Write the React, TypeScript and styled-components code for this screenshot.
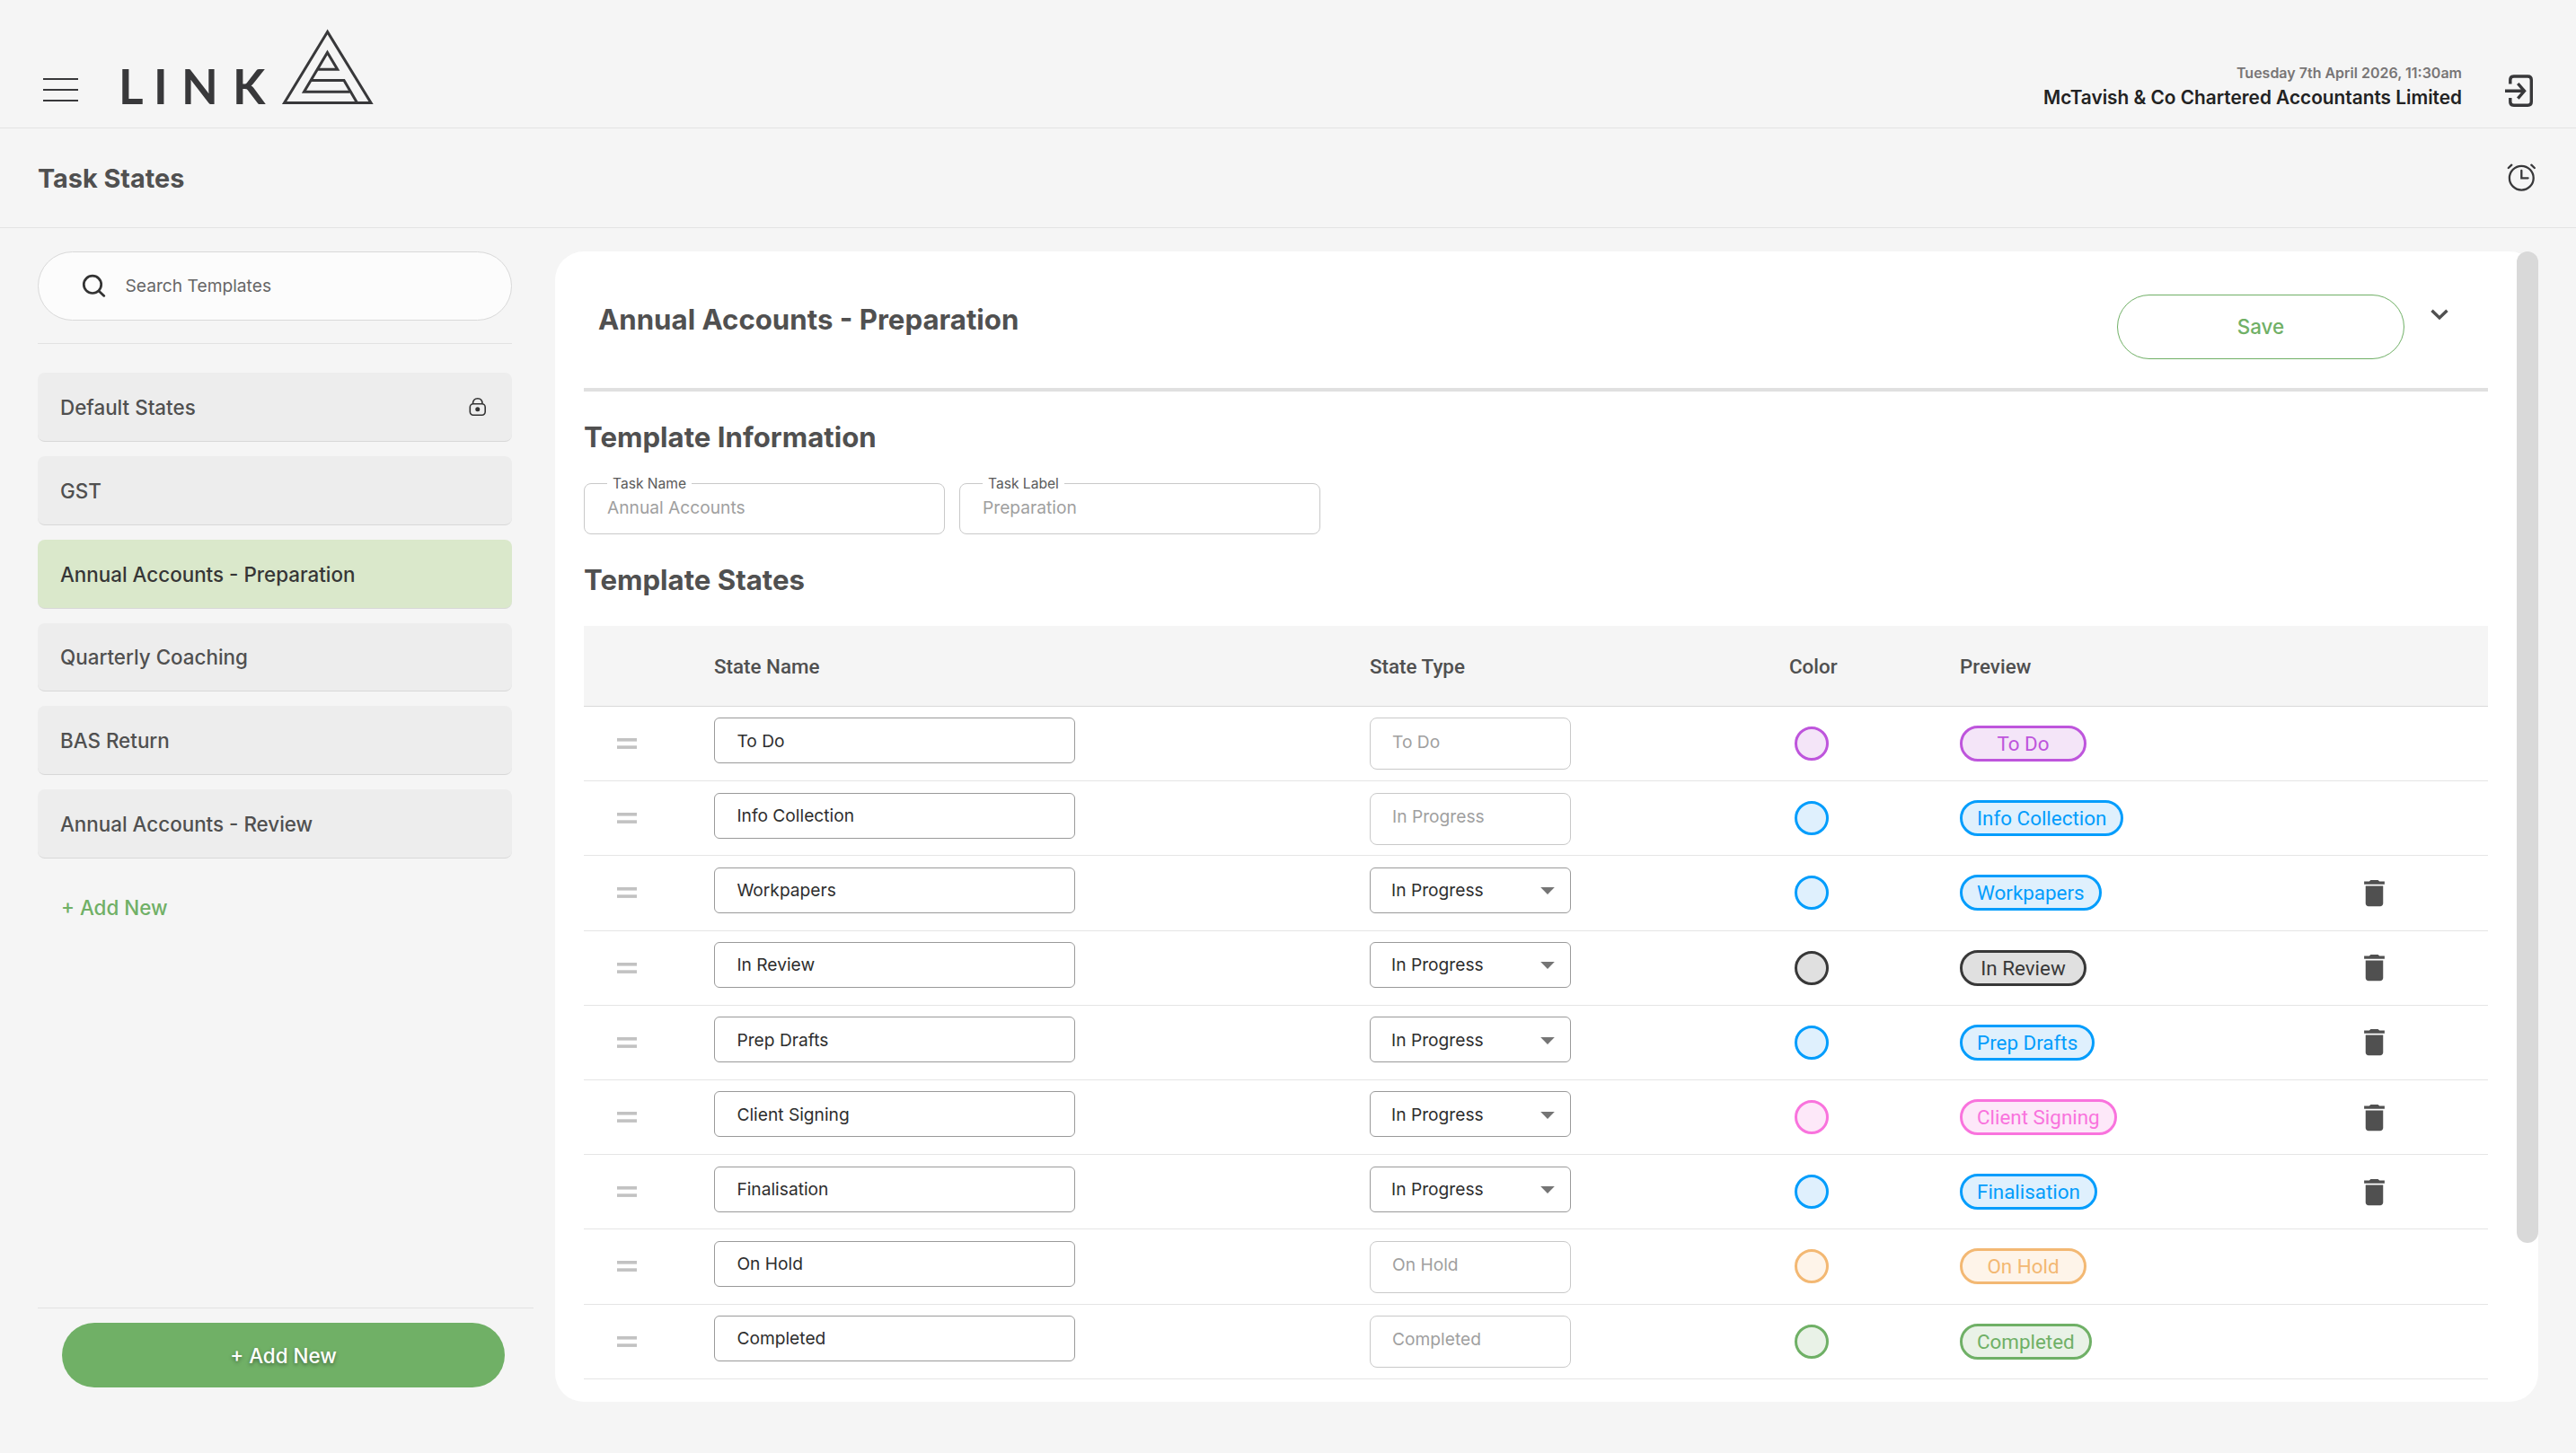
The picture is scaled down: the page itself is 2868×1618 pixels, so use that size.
import styled, { createGlobalStyle } from "styled-components"

interface StateRow {
    name: string;
    type: string;
    color: string;
    fill: string;
    locked?: boolean;
}

const templates = [
    { label: "Default States", locked: true },
    { label: "GST" },
    { label: "Annual Accounts - Preparation", active: true },
    { label: "Quarterly Coaching" },
    { label: "BAS Return" },
    { label: "Annual Accounts - Review" },
]

const blue = { color: "#039dfc", fill: "#dff0fd" }

const states: StateRow[] = [
    { name: "To Do", type: "To Do", color: "#be55dc", fill: "#f4e5f8", locked: true },
    { name: "Info Collection", type: "In Progress", ...blue, locked: true },
    { name: "Workpapers", type: "In Progress", ...blue },
    { name: "In Review", type: "In Progress", color: "#383838", fill: "#e0e0e0" },
    { name: "Prep Drafts", type: "In Progress", ...blue },
    { name: "Client Signing", type: "In Progress", color: "#f973dd", fill: "#fde8f9" },
    { name: "Finalisation", type: "In Progress", ...blue },
    { name: "On Hold", type: "On Hold", color: "#f3b873", fill: "#fef4e9", locked: true },
    { name: "Completed", type: "Completed", color: "#6fb066", fill: "#e9f2e7", locked: true },
]

const GlobalStyle = createGlobalStyle`
    * {
        box-sizing: border-box;
    }

    body {
        margin: 0;
        background: #f5f5f5;
        color: #505050;
        font-family: Inter, "Liberation Sans", sans-serif;
    }

    svg {
        display: block;
        flex: none;
    }
`;

const Page = styled.div`
    display: flex;
    flex-direction: column;
    height: 1618px;
    overflow: hidden;
`;

const TopBar = styled.header`
    display: flex;
    align-items: flex-end;
    height: 143px;
    padding: 0 46px 18px 48px;
    border-bottom: 1px solid #e3e3e3;
`;

const MenuButton = styled.div`
    display: flex;
    flex-direction: column;
    gap: 10px;
    width: 39px;
    margin: 0 45px 11px 0;
`;

const MenuLine = styled.span`
    height: 2px;
    background: #38383a;
`;

const Logo = styled.div`
    display: flex;
    align-items: flex-end;
    margin-bottom: 7px;
`;

const LogoText = styled.div`
    display: grid;
    grid-template-columns: 39px 31px 57px 54px;
    height: 43px;
    color: #38383a;
    font: bold 53px/43px Lato, sans-serif;
`;

const Account = styled.div`
    display: flex;
    flex-direction: column;
    align-items: flex-end;
    margin-left: auto;
    margin-right: 48px;
`;

const DateText = styled.span`
    color: #787576;
    font-size: 16px;
    font-weight: 600;
    line-height: 24px;
`;

const CompanyName = styled.span`
    color: #222;
    font-size: 20.8px;
    font-weight: 600;
    line-height: 31px;
`;

const LogoutButton = styled.div`
    margin-bottom: 4px;
`;

const TitleBar = styled.div`
    display: flex;
    align-items: center;
    justify-content: space-between;
    height: 111px;
    padding: 0 43px 0 42px;
    border-bottom: 1px solid #e3e3e3;
`;

const PageTitle = styled.h1`
    margin: 0;
    font-size: 28.8px;
    font-weight: 700;
`;

const Body = styled.div`
    display: flex;
    flex: 1;
    padding: 26px 42px 57px;
`;

const Sidebar = styled.aside`
    display: flex;
    flex-direction: column;
    width: 576px;
`;

const Search = styled.div`
    display: flex;
    align-items: center;
    gap: 21.5px;
    width: 528px;
    height: 77px;
    padding: 0 0 1px 48px;
    border: 1px solid #d9d9d9;
    border-radius: 39px;
    background: #fcfcfc;
    color: #666;
    font-size: 19.2px;
`;

const Divider = styled.div`
    height: 1px;
    background: #e2e2e2;
`;

const SearchDivider = styled(Divider)`
    width: 528px;
    margin-top: 25px;
`;

const FooterDivider = styled(Divider)`
    width: 552px;
`;

const TemplateList = styled.div`
    display: flex;
    flex-direction: column;
    gap: 16px;
    width: 528px;
    margin-top: 32px;
`;

const TemplateItem = styled.div<{ $active?: boolean }>`
    display: flex;
    align-items: center;
    justify-content: space-between;
    height: 76.85px;
    padding: 1px 28px 0 25px;
    border-bottom: 1px solid #d8d8d8;
    border-radius: 8px;
    background: ${(p) => (p.$active ? "#dae8cb" : "#ededed")};
    color: ${(p) => (p.$active ? "#363636" : "#505050")};
    font-size: 22.4px;
    font-weight: 500;
`;

const AddLink = styled(TemplateItem)`
    padding-left: 26px;
    border-color: transparent;
    background: none;
    color: #70b066;
`;

const SidebarFooter = styled.div`
    margin-top: auto;
`;

const AddButton = styled.div`
    display: flex;
    align-items: center;
    justify-content: center;
    width: 493px;
    height: 72px;
    margin: 16px 0 16px 27px;
    border-radius: 36px;
    background: #70b066;
    color: white;
    font-size: 22.4px;
    font-weight: 500;
    text-shadow: 0 2px 4px rgba(0, 0, 0, 0.4);
`;

const Panel = styled.main`
    position: relative;
    width: 2208px;
    padding: 0 56px 0 32px;
    border-radius: 32px;
    background: white;
`;

const ScrollThumb = styled.div`
    position: absolute;
    top: 0;
    right: 0;
    width: 24px;
    height: 1104px;
    border-radius: 12px;
    background: #d9d9d9;
`;

const PanelHeader = styled.div`
    display: flex;
    align-items: flex-start;
    height: 156px;
    padding: 48px 44px 0 16px;
    border-bottom: 4px solid #e0e0e0;
`;

const PanelTitle = styled.h2`
    flex: 1;
    margin: 8px 0 0;
    font-size: 31.2px;
    line-height: 40px;
`;

const SaveButton = styled.div`
    display: flex;
    align-items: center;
    justify-content: center;
    width: 320px;
    height: 72px;
    margin-right: 29px;
    padding-bottom: 1px;
    border: 1px solid #70b066;
    border-radius: 36px;
    color: #70b066;
    font-size: 22.4px;
    font-weight: 500;
`;

const ChevronIcon = styled.svg`
    margin-top: 16px;
`;

const SectionTitle = styled.h3`
    margin: 31px 0 -1px;
    font-size: 31.2px;
    line-height: 40px;
`;

const Fields = styled.div`
    display: flex;
    gap: 16px;
    margin-top: 24px;
`;

const Field = styled.fieldset`
    width: 402px;
    height: 65px;
    margin: 0;
    padding: 0 25px;
    border: 1px solid #c9c9c9;
    border-radius: 8px;
    color: #a0a0a0;
    font-size: 19.2px;
    line-height: 36px;
`;

const FieldLabel = styled.legend`
    padding: 0 6px;
    color: #5a5a5a;
    font-size: 15.6px;
    line-height: 17px;
`;

const Table = styled.div`
    margin-top: 32px;
`;

const Row = styled.div`
    display: grid;
    grid-template-columns: 145px 730px 467px 190px 442px 1fr;
    height: 83.2px;
    border-bottom: 1px solid #e5e5e5;
`;

const HeadRow = styled(Row)`
    align-items: center;
    height: 90px;
    border-color: #dadada;
    background: #f5f5f5;
    font-family: Roboto, sans-serif;
    font-size: 22.4px;
    font-weight: 500;
`;

const Cell = styled.div<{ $top?: boolean }>`
    display: flex;
    align-items: ${(p) => (p.$top ? "flex-start" : "center")};
    padding-top: ${(p) => (p.$top ? "12.4px" : "0")};
`;

const DragIcon = styled.svg`
    margin-left: 37px;
`;

const NameInput = styled.div`
    display: flex;
    align-items: center;
    width: 402px;
    height: 51px;
    padding: 0 24.4px;
    border: 1px solid #9a9a9a;
    border-radius: 6px;
    color: #2e2e2e;
    font-size: 19.2px;
`;

const TypeSelect = styled(NameInput)`
    justify-content: space-between;
    width: 224px;
    padding: 0 7px 0 23px;
`;

const TypeLocked = styled(NameInput)`
    width: 224px;
    height: 58px;
    padding: 0 24px 5px;
    border-color: #c9c9c9;
    border-radius: 8px;
    color: #a0a0a0;
`;

const ColorDot = styled.span<{ $color: string; $fill: string }>`
    width: 38px;
    height: 38px;
    margin-left: 6px;
    border: 3px solid ${(p) => p.$color};
    border-radius: 50%;
    background: ${(p) => p.$fill};
`;

const Chip = styled.span<{ $color: string; $fill: string }>`
    min-width: 141px;
    height: 40px;
    padding: 0 16px;
    border: 3px solid ${(p) => p.$color};
    border-radius: 20px;
    background: ${(p) => p.$fill};
    color: ${(p) => p.$color};
    font: 22.4px/35px Roboto, sans-serif;
    text-align: center;
    white-space: nowrap;
`;

function LogoMark() {
    return (
        <svg width="103" height="86" viewBox="313 31 103 86" fill="none" stroke="#38383a" strokeWidth="3">
            <path d="M364.6 35.5 316.6 114.5H413Z" />
            <path d="M389.5 102.3H338.5L364.5 58.5 375.7 77.2H354" />
            <path d="M347 89.6H383L397.6 114.5" />
        </svg>
    )
}

function LogoutIcon() {
    return (
        <svg width="33" height="38" viewBox="2789 82 33 38" fill="none" stroke="#38383a" strokeWidth="3.4">
            <path d="M2794.8 93.5V89q0-4 4-4h15.5q4 0 4 4v24.3q0 4-4 4h-15.5q-4 0-4-4V109" />
            <path d="M2789 101.3h22M2803.3 93l7.2 8.3-7.2 8.3" />
        </svg>
    )
}

function AlarmIcon() {
    return (
        <svg width="34" height="34" viewBox="2791 181 34 34" fill="none" stroke="#38383a" strokeWidth="2.3" strokeLinecap="round">
            <circle cx="2807.3" cy="198.2" r="13.4" />
            <path d="M2807.3 189.8v8.5h7.3M2792.8 187l3.500-3.300M2821.800 187l-3.500-3.300" />
        </svg>
    )
}

function SearchIcon() {
    return (
        <svg width="27" height="26" viewBox="91 305 27 26" fill="none" stroke="#333" strokeWidth="2.7" strokeLinecap="round">
            <circle cx="103" cy="316.8" r="9.7" />
            <path d="M110 324l5.8 5.4" />
        </svg>
    )
}

function LockIcon() {
    return (
        <svg width="20" height="22" viewBox="0 0 20 22" fill="none" stroke="#333" strokeWidth="1.6">
            <rect x="1.3" y="7.8" width="16.9" height="12.4" rx="3.6" />
            <path d="M4.5 7.5C4.5 3.8 6.5 1.7 9.75 1.7S15 3.8 15 7.5" />
            <circle cx="9.75" cy="13.7" r="1.7" fill="#333" />
        </svg>
    )
}

function DragHandle() {
    return (
        <DragIcon width="22" height="12" fill="#c2c2c2">
            <rect y="0" width="22" height="3.6" />
            <rect y="8.3" width="22" height="3.6" />
        </DragIcon>
    )
}

function ArrowDown() {
    return (
        <svg width="36" height="36" viewBox="0 0 24 24" fill="#757575">
            <path d="M6.8 10l5.2 5.3 5.2-5.3z" />
        </svg>
    )
}

function TrashIcon() {
    return (
        <svg width="39" height="39" viewBox="0 0 24 24" fill="#505050">
            <path d="M6 19c0 1.1.9 2 2 2h8c1.1 0 2-.9 2-2V7H6v12zM19 4h-3.5l-1-1h-5l-1 1H5v2h14V4z" />
        </svg>
    )
}

export default function App() {
    return (
        <Page>
            <GlobalStyle />
            <TopBar>
                <MenuButton>
                    <MenuLine />
                    <MenuLine />
                    <MenuLine />
                </MenuButton>
                <Logo>
                    <LogoText>
                        {"LINK".split("").map((letter) => <span key={letter}>{letter}</span>)}
                    </LogoText>
                    <LogoMark />
                </Logo>
                <Account>
                    <DateText>Tuesday 7th April 2026, 11:30am</DateText>
                    <CompanyName>McTavish &amp; Co Chartered Accountants Limited</CompanyName>
                </Account>
                <LogoutButton>
                    <LogoutIcon />
                </LogoutButton>
            </TopBar>
            <TitleBar>
                <PageTitle>Task States</PageTitle>
                <AlarmIcon />
            </TitleBar>
            <Body>
                <Sidebar>
                    <Search>
                        <SearchIcon />
                        Search Templates
                    </Search>
                    <SearchDivider />
                    <TemplateList>
                        {templates.map((t) => (
                            <TemplateItem key={t.label} $active={t.active}>
                                {t.label}
                                {t.locked && <LockIcon />}
                            </TemplateItem>
                        ))}
                        <AddLink>+ Add New</AddLink>
                    </TemplateList>
                    <SidebarFooter>
                        <FooterDivider />
                        <AddButton>+ Add New</AddButton>
                    </SidebarFooter>
                </Sidebar>
                <Panel>
                    <PanelHeader>
                        <PanelTitle>Annual Accounts - Preparation</PanelTitle>
                        <SaveButton>Save</SaveButton>
                        <ChevronIcon width="20" height="13" viewBox="0 0 20 13" fill="none" stroke="#505050" strokeWidth="3.4">
                            <path d="M1.5 1.8l8.5 8.2 8.5-8.2" />
                        </ChevronIcon>
                    </PanelHeader>
                    <SectionTitle>Template Information</SectionTitle>
                    <Fields>
                        <Field>
                            <FieldLabel>Task Name</FieldLabel>
                            Annual Accounts
                        </Field>
                        <Field>
                            <FieldLabel>Task Label</FieldLabel>
                            Preparation
                        </Field>
                    </Fields>
                    <SectionTitle>Template States</SectionTitle>
                    <Table>
                        <HeadRow>
                            <span />
                            <span>State Name</span>
                            <span>State Type</span>
                            <span>Color</span>
                            <span>Preview</span>
                        </HeadRow>
                        {states.map((s) => (
                            <Row key={s.name}>
                                <Cell><DragHandle /></Cell>
                                <Cell $top><NameInput>{s.name}</NameInput></Cell>
                                <Cell $top>
                                    {s.locked
                                        ? <TypeLocked>{s.type}</TypeLocked>
                                        : <TypeSelect>{s.type}<ArrowDown /></TypeSelect>}
                                </Cell>
                                <Cell><ColorDot $color={s.color} $fill={s.fill} /></Cell>
                                <Cell><Chip $color={s.color} $fill={s.fill}>{s.name}</Chip></Cell>
                                <Cell>{!s.locked && <TrashIcon />}</Cell>
                            </Row>
                        ))}
                    </Table>
                    <ScrollThumb />
                </Panel>
            </Body>
        </Page>
    )
}
